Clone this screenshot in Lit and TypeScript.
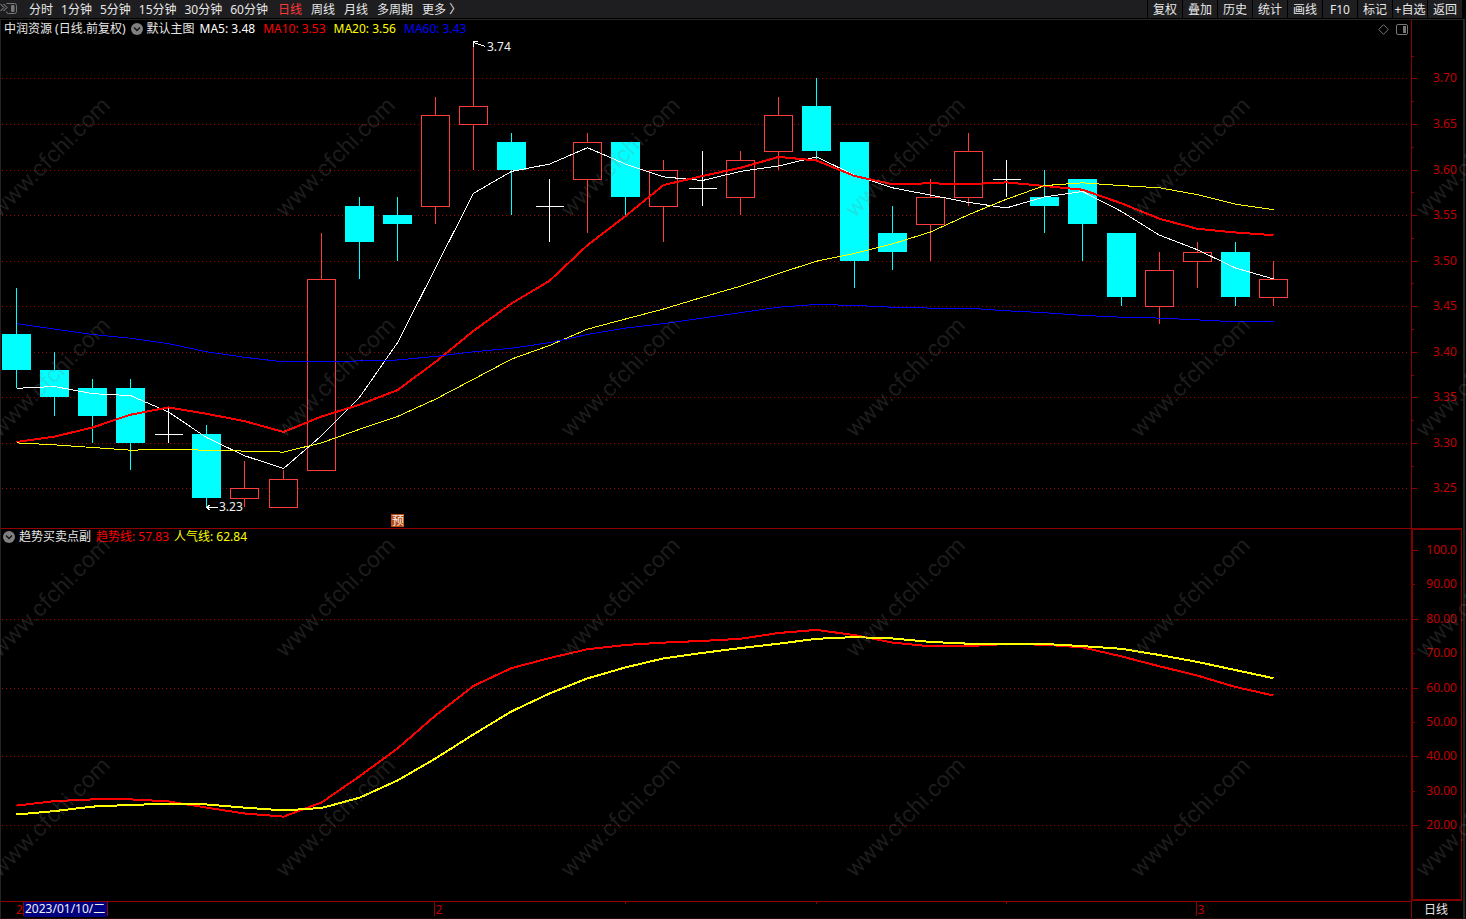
import { LitElement, html, svg, css } from "lit";
import { customElement, state } from "lit/decorators.js";

type Candle = [open: number, high: number, low: number, close: number];

const CANDLES: Candle[] = [
  [3.42, 3.47, 3.36, 3.38], [3.38, 3.4, 3.33, 3.35], [3.36, 3.37, 3.3, 3.33], [3.36, 3.37, 3.27, 3.3],
  [3.31, 3.34, 3.3, 3.31], [3.31, 3.32, 3.23, 3.24], [3.24, 3.28, 3.23, 3.25], [3.23, 3.27, 3.23, 3.26],
  [3.27, 3.53, 3.27, 3.48], [3.56, 3.57, 3.48, 3.52], [3.55, 3.57, 3.5, 3.54], [3.56, 3.68, 3.54, 3.66],
  [3.65, 3.74, 3.6, 3.67], [3.63, 3.64, 3.55, 3.6], [3.56, 3.59, 3.52, 3.56], [3.59, 3.64, 3.53, 3.63],
  [3.63, 3.63, 3.55, 3.57], [3.56, 3.61, 3.52, 3.6], [3.58, 3.62, 3.56, 3.58], [3.57, 3.62, 3.55, 3.61],
  [3.62, 3.68, 3.6, 3.66], [3.67, 3.7, 3.61, 3.62], [3.63, 3.63, 3.47, 3.5], [3.53, 3.56, 3.49, 3.51],
  [3.54, 3.59, 3.5, 3.57], [3.57, 3.64, 3.56, 3.62], [3.59, 3.61, 3.57, 3.59], [3.57, 3.6, 3.53, 3.56],
  [3.59, 3.59, 3.5, 3.54], [3.53, 3.53, 3.45, 3.46], [3.45, 3.51, 3.43, 3.49], [3.5, 3.52, 3.47, 3.51],
  [3.51, 3.52, 3.45, 3.46], [3.46, 3.5, 3.45, 3.48],
];

/* Averages for the days whose look-back window starts before the first candle. */
const MA5_HEAD = [3.36, 3.362, 3.354, 3.352];
const MA10_HEAD = [3.301, 3.307, 3.317, 3.331, 3.339, 3.332, 3.324, 3.312, 3.329];
const MA20_HEAD = [
  3.3, 3.298, 3.295, 3.292, 3.293, 3.292, 3.291, 3.29, 3.3, 3.315, 3.329, 3.348, 3.37, 3.392, 3.407, 3.425, 3.436,
  3.447, 3.46,
];
const MA60 = [
  3.431, 3.425, 3.419, 3.415, 3.409, 3.4, 3.394, 3.389, 3.389, 3.39, 3.391, 3.395, 3.4, 3.404, 3.41, 3.419, 3.426,
  3.431, 3.437, 3.443, 3.449, 3.452, 3.451, 3.449, 3.448, 3.448, 3.445, 3.443, 3.44, 3.438, 3.437, 3.435, 3.433, 3.433,
];
const TREND = [
  25.8, 27.1, 27.6, 27.6, 27, 25.2, 23.5, 22.6, 26.7, 34.3, 42.4, 52, 60.6, 65.8, 68.7, 71.3, 72.5, 73.2, 73.7, 74.3,
  76, 76.9, 75.4, 73.2, 72.1, 72.2, 72.8, 72.6, 71.8, 69.2, 66.3, 63.6, 60.3, 57.83,
];
const POPULARITY = [
  23.2, 24.2, 25.5, 26, 26.3, 26.1, 25.2, 24.4, 25.1, 28.1, 33.1, 39.5, 46.5, 53.2, 58.4, 62.8, 66, 68.6, 70.2, 71.6,
  72.9, 74.3, 74.8, 74.4, 73.4, 72.9, 72.9, 72.8, 72.2, 71.4, 69.6, 67.6, 65.2, 62.84,
];

const movingAverage = (n: number, head: number[]) =>
  CANDLES.map((_, i) =>
    i < n - 1 ? head[i] : CANDLES.slice(i - n + 1, i + 1).reduce((sum, c) => sum + c[3], 0) / n,
  );

const MINUTES = ["分时", "1分钟", "5分钟", "15分钟", "30分钟", "60分钟"];
const PERIODS = ["日线", "周线", "月线", "多周期", "更多 〉"];
const ACTIONS = ["复权", "叠加", "历史", "统计", "画线", "F10", "标记", "+自选", "返回"];

const TOOLBAR = 19;
const FOOTER = 18;
const AXIS = 52;
const FRAME = 4;

@customElement("app-root")
export class AppRoot extends LitElement {
  @state() private w = 1466;
  @state() private h = 919;
  @state() private period = "日线";
  private observer?: ResizeObserver;

  static styles = css`
    :host {
      display: block;
      height: 100vh;
      overflow: hidden;
      background: #000;
      color: #e8e8e8;
      font: 12px/18px "Noto Sans", "Noto Sans CJK SC", sans-serif;
    }
    * {
      box-sizing: border-box;
    }
    button {
      margin: 0;
      padding: 0;
      border: 0;
      background: none;
      color: inherit;
      font: inherit;
      white-space: nowrap;
      cursor: pointer;
    }
    svg {
      display: block;
    }
    .stack {
      display: grid;
      height: 100%;
    }
    .app {
      display: grid;
      grid-template-rows: 19px minmax(0, 509fr) minmax(0, 373fr) 18px;
      height: 100%;
      grid-area: 1 / 1;
    }
    .toolbar {
      display: flex;
      align-items: stretch;
      background: #1e1e20;
      border-bottom: 1px solid #000;
      height: 19px;
      margin-right: 3px;
      overflow: hidden;
    }
    .toolbar button {
      padding-top: 1px;
      line-height: 17px;
    }
    .toolbar .toggle {
      width: 18px;
      padding: 0;
    }
    .minutes {
      display: flex;
      gap: 8px;
      padding: 0 10px 0 11px;
    }
    .periods {
      display: flex;
      gap: 9px;
    }
    .active {
      color: #ff3838;
    }
    .actions {
      display: flex;
      gap: 1px;
      margin-left: auto;
      background: #000;
      padding: 0 1px;
    }
    .actions button {
      width: 34px;
      background: #1e1e20;
      overflow: hidden;
    }
    .panel {
      display: grid;
      grid-template: minmax(0, 1fr) / minmax(0, 1fr);
      border-left: 1px solid #252525;
      border-right: 2px solid #252525;
      margin-right: 1px;
      min-height: 0;
    }
    .panel > svg {
      grid-area: 1 / 1;
      width: 100%;
      height: 100%;
    }
    .first {
      border-top: 1px solid #252525;
    }
    .legend {
      grid-area: 1 / 1;
      align-self: start;
      display: flex;
      align-items: center;
      height: 18px;
      gap: 5px;
      padding: 0 55px 0 3px;
      z-index: 1;
      white-space: nowrap;
    }
    .legend.sub {
      padding-left: 2px;
    }
    .name {
      display: flex;
      align-items: center;
      gap: 4px;
    }
    .values {
      display: flex;
      gap: 8px;
    }
    .sub .values {
      gap: 5px;
    }
    .tools {
      display: flex;
      gap: 7px;
      margin-left: auto;
    }
    .white { color: #fff; }
    .red { color: #f00; }
    .yellow { color: #ff0; }
    .blue { color: #00f; }
    .footer {
      display: flex;
      border-left: 1px solid #252525;
      border-right: 2px solid #252525;
      margin-right: 1px;
      border-bottom: 1px solid #200808;
    }
    .footer svg {
      flex: 1;
      min-width: 0;
      height: 17px;
    }
    .footer button {
      width: 52px;
      padding-right: 3px;
      border-left: 1px solid #900000;
      line-height: 17px;
    }
    .crisp {
      shape-rendering: crispEdges;
    }
    .grid { stroke: #a00000; stroke-dasharray: 1 3; }
    .rule { stroke: #900000; fill: none; }
    .rule2 { stroke: #800000; stroke-width: 2; fill: none; }
    .label { fill: #c00000; }
    .note { fill: #f0f0f0; }
    .noteline { stroke: #fff; fill: none; }
    .up { stroke: #ff3c3c; fill: #000; }
    .down { stroke: #0ff; }
    .downbody { fill: #0ff; }
    .flat { stroke: #fff; }
    .line { fill: none; stroke-width: 1; }
    .thick { fill: none; stroke-width: 2; }
    .s-white { stroke: #fff; }
    .s-red { stroke: #f00; }
    .s-yellow { stroke: #ff0; }
    .s-blue { stroke: #00f; }
    .badge { fill: #b84c10; }
    .date { fill: #000080; }
    .mark {
      grid-area: 1 / 1;
      width: 100%;
      height: 100%;
      pointer-events: none;
      z-index: 2;
    }
    .mark text {
      font: 23px Roboto, sans-serif;
      fill: #808080;
      fill-opacity: 0.22;
      text-anchor: middle;
    }
  `;

  connectedCallback() {
    super.connectedCallback();
    this.observer = new ResizeObserver(() => this.measure());
    this.observer.observe(this);
    this.measure();
  }

  disconnectedCallback() {
    this.observer?.disconnect();
    super.disconnectedCallback();
  }

  private measure() {
    const box = this.getBoundingClientRect();
    if (box.width && box.height) {
      this.w = box.width;
      this.h = box.height;
    }
  }

  private get plotW() {
    return this.w - FRAME - AXIS;
  }

  private x(i: number) {
    return Math.floor(15.4 + (i * (this.plotW - 153)) / (CANDLES.length - 1)) + 0.5;
  }

  private path(values: number[], y: (v: number) => number) {
    return values.map((v, i) => `${this.x(i)},${(y(v) + 0.5).toFixed(1)}`).join(" ");
  }

  private candle([o, hi, lo, c]: Candle, i: number, px: (v: number) => number) {
    const x = this.x(i);
    const top = px(Math.max(o, c));
    const bottom = px(Math.min(o, c));
    const yh = px(hi);
    const yl = px(lo);
    if (o === c) {
      return svg`<path class="flat" d=${`M${x} ${yh}V${yl}M${x - 14} ${top + 0.5}H${x + 14}`} />`;
    }
    if (c > o) {
      return svg`<g class="up"><path d=${`M${x} ${yh}V${top}M${x} ${bottom}V${yl}`} />
        <rect x=${x - 14} y=${top + 0.5} width="28" height=${bottom - top} /></g>`;
    }
    return svg`<path class="down" d=${`M${x} ${yh}V${yl}`} />
      <rect class="downbody" x=${x - 14.5} y=${top} width="29" height=${bottom - top} />`;
  }

  private renderPrice(h: number) {
    const w = this.plotW;
    const y = (p: number) => 58 + ((3.7 - p) * (h - 99)) / 0.45;
    const px = (p: number) => Math.ceil(y(p) - 0.05);
    const row = (p: number) => px(p) + 0.5;
    const levels = Array.from({ length: 10 }, (_, i) => 3.7 - i * 0.05);
    const high = { x: this.x(12), y: row(3.74) };
    const low = { x: this.x(5), y: row(3.23) };
    return html`<svg role="img" aria-label="日线K线图">
      <g class="crisp">
        ${levels.map((p) => svg`<path class="grid" d=${`M1 ${row(p)}H${w - 2}`} />
          <path class="rule" d=${`M${w} ${row(p)}h6M${w} ${row(p + 0.025)}h3`} />`)}
        <path class="rule" d=${`M${w + 0.5} 0V${h}`} />
        ${CANDLES.map((c, i) => this.candle(c, i, px))}
        <polyline class="line s-white" points=${this.path(movingAverage(5, MA5_HEAD), y)} />
        <polyline class="thick s-red" points=${this.path(movingAverage(10, MA10_HEAD), y)} />
        <polyline class="line s-yellow" points=${this.path(movingAverage(20, MA20_HEAD), y)} />
        <polyline class="line s-blue" points=${this.path(MA60, y)} />
        <path class="noteline" d=${`M${high.x} ${high.y}l12 4M${high.x} ${high.y + 4}v-5h4`} />
        <path class="noteline" d=${`M${low.x} ${low.y}h11M${low.x + 4} ${low.y - 3}l-4 3l4 3`} />
        <rect class="badge" x=${this.x(10) - 6.5} y=${h - 15} width="13" height="13" />
      </g>
      ${levels.map((p) => svg`<text class="label" x=${w + 22} y=${row(p) + 3.5}>${p.toFixed(2)}</text>`)}
      <text class="note" x=${high.x + 13.5} y=${high.y + 8.5}>3.74</text>
      <text class="note" x=${low.x + 12.5} y=${low.y + 3.5}>3.23</text>
      <text class="note" x=${this.x(10) - 5.5} y=${h - 4}>预</text>
    </svg>`;
  }

  private renderTrend(h: number) {
    const w = this.plotW;
    const y = (v: number) => 22 + ((100 - v) * (h - 98)) / 80;
    const row = (v: number) => Math.round(y(v)) + 0.5;
    const levels = [100, 90, 80, 70, 60, 50, 40, 30, 20];
    return html`<svg role="img" aria-label="趋势买卖点副图">
      <g class="crisp">
        ${levels.map((v) => svg`
          ${v % 20 === 0 && v < 100 ? svg`<path class="grid" d=${`M1 ${row(v)}H${w - 2}`} />` : ""}
          <path class="rule" d=${`M${w + 2} ${row(v)}h${v % 20 ? 2 : 5}`} />`)}
        <path class="rule" d=${`M0 0.5H${w}`} />
        <path class="rule2" d=${`M${w + 1} 1H${w + 51}M${w + 1} 0V${h}M${w} ${h - 1}H${w + 51}`} />
        <path class="rule" d=${`M${w + 50.5} 0V${h}`} />
        <polyline class="thick s-red" points=${this.path(TREND, y)} />
        <polyline class="thick s-yellow" points=${this.path(POPULARITY, y)} />
      </g>
      ${levels.map((v) => svg`<text class="label" x=${w + 46} y=${row(v) + 3.5} text-anchor="end">${
        v === 100 ? "100.0" : v.toFixed(2)}</text>`)}
    </svg>`;
  }

  private renderTimeAxis() {
    const feb = this.x(11) - 1;
    const mar = this.x(31) - 1;
    return html`<svg>
      <g class="crisp">
        <path class="rule" d=${`M0 .5H${this.plotW}M${feb} 0V15M${mar} 0V15`} />
        <path class="rule" d=${[16, 21, 26].map((i) => `M${this.x(i)} 0v3`).join("")} />
        <rect class="date" x="23" y="1" width="83" height="15" />
        <path class="rule" d="M22.5 0V15M106.5 0V15" />
      </g>
      <text class="label" x="15" y="13">2</text>
      <text class="note" x="24" y="12">2023/01/10/二</text>
      <text class="label" x=${feb + 1} y="13">2</text>
      <text class="label" x=${mar + 1} y="13">3</text>
    </svg>`;
  }

  private renderWatermark() {
    const marks = [];
    for (let y = 157; y < this.h + 80; y += 220) {
      for (let x = 50; x < this.w + 80; x += 285) {
        marks.push(svg`<text transform=${`translate(${x} ${y}) rotate(-45)`} dy="8">www.cfchi.com</text>`);
      }
    }
    return html`<svg class="mark" aria-hidden="true">${marks}</svg>`;
  }

  private chevron(label: string) {
    return html`<button aria-label=${label}>
      <svg width="12" height="12" viewBox="0 0 12 12">
        <circle cx="6" cy="6" r="6" fill="#808080" />
        <path d="M3 4.5l3 3l3-3" fill="none" stroke="#111" stroke-width="1.4" />
      </svg>
    </button>`;
  }

  render() {
    const avail = this.h - TOOLBAR - FOOTER;
    const priceH = Math.round((avail * 509) / 882);
    return html`<div class="stack">
      <div class="app">
        <nav class="toolbar">
          <button class="toggle" aria-label="展开侧栏">
            <svg width="18" height="18" viewBox="0 0 18 18" fill="none" stroke="#777">
              <path d="M6.500 3.500H14.500q2 0 2 2v6q0 2-2 2H8.500q-2 0-2-2" />
              <path d="M11.500 5.500h2.500v6h-2.500z" fill="#777" />
              <path d="M.5 4l3.500 3.500L.5 11M3.500 4L7 7.500L3.500 11" stroke="#999" />
            </svg>
          </button>
          <div class="minutes">${MINUTES.map((t) => this.tab(t))}</div>
          <div class="periods">${PERIODS.map((t) => this.tab(t))}</div>
          <div class="actions">${ACTIONS.map((t) => html`<button>${t}</button>`)}</div>
        </nav>
        <section class="panel first">
          ${this.renderPrice(priceH)}
          <div class="legend">
            <span>中润资源 (日线.前复权)</span>
            <span class="name">${this.chevron("主图指标")}默认主图</span>
            <div class="values">
              <span class="white">MA5: 3.48</span>
              <span class="red">MA10: 3.53</span>
              <span class="yellow">MA20: 3.56</span>
              <span class="blue">MA60: 3.43</span>
            </div>
            <div class="tools">
              <button aria-label="标记">
                <svg width="11" height="11" viewBox="0 0 11 11" fill="none" stroke="#777">
                  <path d="M5.500 .7L10.300 5.500L5.500 10.300L.7 5.500z" />
                </svg>
              </button>
              <button aria-label="侧栏">
                <svg width="12" height="11" viewBox="0 0 12 11" fill="none" stroke="#777">
                  <rect x=".5" y=".5" width="11" height="10" rx="1.500" />
                  <path d="M7 2h3v7h-3z" fill="#777" stroke="none" />
                </svg>
              </button>
            </div>
          </div>
        </section>
        <section class="panel">
          ${this.renderTrend(avail - priceH)}
          <div class="legend sub">
            <span class="name">${this.chevron("副图指标")}趋势买卖点副</span>
            <div class="values">
              <span class="red">趋势线: 57.83</span>
              <span class="yellow">人气线: 62.84</span>
            </div>
          </div>
        </section>
        <footer class="footer">
          ${this.renderTimeAxis()}
          <button>日线</button>
        </footer>
      </div>
      ${this.renderWatermark()}
    </div>`;
  }

  private tab(name: string) {
    return html`<button
      class=${name === this.period ? "active" : ""}
      @click=${() => (this.period = name)}
    >${name}</button>`;
  }
}
